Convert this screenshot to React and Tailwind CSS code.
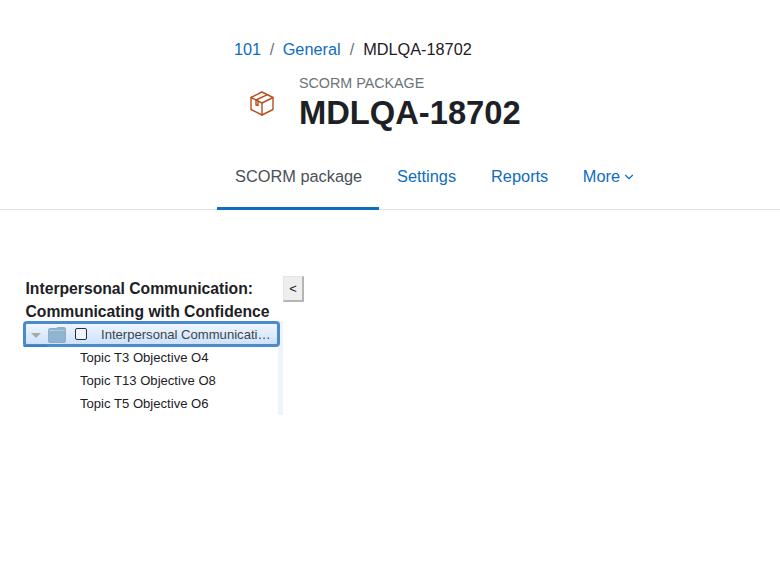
import { ChevronDown } from "lucide-react";

const topics = ["Topic T3 Objective O4", "Topic T13 Objective O8", "Topic T5 Objective O6"];

function BoxIcon() {
  return (
    <svg width="24" height="25" viewBox="0 0 24 25" fill="none" stroke="#b6501f" strokeWidth="1.4" strokeLinejoin="round" strokeLinecap="round">
      <path d="M12 1 L23 6.5 V18.5 L12 24 L1 18.5 V6.5 Z" />
      <path d="M1 6.5 L12 12 L23 6.5" />
      <path d="M12 12 V24" />
      <path d="M6 9 L17.5 3.7" />
      <path d="M6 9 V14 L8 14.5 V10" />
    </svg>
  );
}

function FolderIcon() {
  return (
    <svg width="18" height="16" viewBox="0 0 18 16">
      <path d="M0.5 3 Q0.5 1.5 2 1.5 H8 L10 0.5 H16 Q17.5 0.5 17.5 2 V14 Q17.5 15.5 16 15.5 H2 Q0.5 15.5 0.5 14 Z" fill="#8fb4d0" stroke="#7c9db8" strokeWidth="0.7" />
      <path d="M1 3.5 H17" stroke="#aecbe0" strokeWidth="1" />
    </svg>
  );
}

export default function App() {
  return (
    <div className="min-h-screen bg-white text-[#1d2125] font-['Liberation_Sans',Arial,sans-serif]">
      <header className="border-b border-[#dee2e6] pl-[217px] h-[210px] flex flex-col">
        <nav className="pl-[17px] pt-[39px] flex items-center text-[16.3px] leading-[20px]">
          <a className="text-[#0f6cbf]">101</a>
          <span className="text-[#6a737b] px-[8.5px]">/</span>
          <a className="text-[#0f6cbf]">General</a>
          <span className="text-[#6a737b] px-[9px]">/</span>
          <span>MDLQA-18702</span>
        </nav>

        <div className="flex pl-[33px] mt-[15px]">
          <div className="pt-[17px] w-[49px]">
            <BoxIcon />
          </div>
          <div>
            <div className="text-[14.3px] leading-[17px] text-[#6a737b] mt-[1px]">SCORM PACKAGE</div>
            <h1 className="text-[32.7px] leading-[40px] font-bold mt-[1px]">MDLQA-18702</h1>
          </div>
        </div>

        <div className="flex mt-[17px] text-[16.35px] leading-[24px]">
          <a className="w-[162px] h-[60px] shrink-0 pl-[18px] pt-[14px] border-b-[3px] border-[#0f6cbf] text-[#495057]">SCORM package</a>
          <a className="pl-[18px] pr-[17px] pt-[14px] text-[#0f6cbf]">Settings</a>
          <a className="pl-[18px] pr-[17px] pt-[14px] text-[#0f6cbf]">Reports</a>
          <a className="pl-[17.5px] pt-[14px] text-[#0f6cbf] flex items-start gap-[2px]">
            More
            <ChevronDown size={14} strokeWidth={2} className="mt-[6px]" />
          </a>
        </div>
      </header>

      <div className="flex pl-[25px] pt-[66px]">
        <div className="w-[258px]">
          <div className="text-[15.7px] font-bold leading-[23px] pt-[1px] pl-[0.5px]">
            Interpersonal Communication:
            <br />
            Communicating with Confidence
          </div>
          <div className="border-r-[5px] border-[#eef4fd] -mt-[2px]">
            <div className="relative -ml-[2px] -mr-[2px] h-[26px] flex items-center pt-[2px] rounded-[4px] border-[3px] border-[#4a8ccb] bg-gradient-to-b from-[#eef5fe] to-[#cfe2fa] text-[13.1px] text-[#3a4550]">
              <span className="ml-[5px] w-0 h-0 border-x-[5px] border-x-transparent border-t-[5px] border-t-[#a9a9a9]"></span>
              <span className="ml-[7px] flex -mt-[1px]">
                <FolderIcon />
              </span>
              <span className="ml-[9px] w-[12px] h-[12px] -mt-[2px] rounded-[2px] border-[1.5px] border-[#26323a] bg-[#eef5fe]"></span>
              <span className="ml-[14px] whitespace-nowrap">Interpersonal Communicati…</span>
              <span className="absolute -left-[3px] -bottom-[3px] w-[24px] h-[2px] bg-[#3f7fbf] rounded-bl-[4px]"></span>
            </div>
            <ul className="text-[13.1px] leading-[23px] pl-[55px] -mt-[1px] text-[#1d2125]">
              {topics.map((t) => (
                <li key={t}>{t}</li>
              ))}
            </ul>
          </div>
        </div>
        <button className="w-[21px] h-[26px] bg-[#eeeeee] border-r-2 border-b-2 border-[#b5b5b5] border-l border-t border-l-[#e4e4e4] border-t-[#e4e4e4] text-[13px] leading-none text-[#1d2125]">
          &lt;
        </button>
      </div>
    </div>
  );
}
